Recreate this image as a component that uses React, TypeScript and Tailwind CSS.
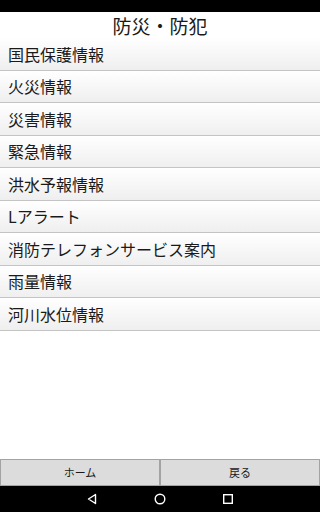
const items = [
  "国民保護情報",
  "火災情報",
  "災害情報",
  "緊急情報",
  "洪水予報情報",
  "Lアラート",
  "消防テレフォンサービス案内",
  "雨量情報",
  "河川水位情報",
];

export default function App() {
  return (
    <div
      className="w-[320px] h-[512px] flex flex-col bg-white text-[#1a1a1a]"
      style={{ fontFamily: '"Noto Sans CJK JP", "Noto Sans", sans-serif' }}
    >
      {/* status bar */}
      <div className="h-[12px] bg-black" />

      <div className="h-[26px] flex items-center justify-center text-[19px] leading-none">
        防災・防犯
      </div>

      <div className="flex flex-col">
        {items.map((item) => (
          <div
            key={item}
            className="h-[32.5px] flex items-center pl-[8px] text-[16px] leading-none bg-gradient-to-b from-white to-[#efefef] border-b border-[#c4c4c4]"
          >
            {item}
          </div>
        ))}
      </div>

      <div className="flex-1" />

      <div className="h-[27px] flex bg-[#a3a3a3] p-[1px] gap-[2px]">
        <button className="flex-1 bg-[#dcdcdc] text-[11px] leading-none">ホーム</button>
        <button className="flex-1 bg-[#dcdcdc] text-[11px] leading-none">戻る</button>
      </div>

      {/* nav bar */}
      <div className="h-[26px] bg-black flex items-center justify-center gap-[56px]">
        <svg width="12" height="12" viewBox="0 0 12 12">
          <path d="M9.5 1.5 L2.5 6 L9.5 10.5 Z" fill="none" stroke="white" strokeWidth="1.4" strokeLinejoin="round" />
        </svg>
        <svg width="12" height="12" viewBox="0 0 12 12">
          <circle cx="6" cy="6" r="4.8" fill="none" stroke="white" strokeWidth="1.4" />
        </svg>
        <svg width="12" height="12" viewBox="0 0 12 12">
          <rect x="1.7" y="1.7" width="8.6" height="8.6" fill="none" stroke="white" strokeWidth="1.4" />
        </svg>
      </div>
    </div>
  );
}
